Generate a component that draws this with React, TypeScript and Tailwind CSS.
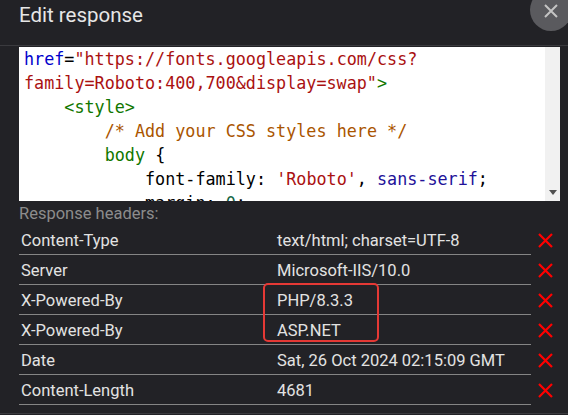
import React from "react";

const rows: [string, string][] = [
  ["Content-Type", "text/html; charset=UTF-8"],
  ["Server", "Microsoft-IIS/10.0"],
  ["X-Powered-By", "PHP/8.3.3"],
  ["X-Powered-By", "ASP.NET"],
  ["Date", "Sat, 26 Oct 2024 02:15:09 GMT"],
  ["Content-Length", "4681"],
];

function RedX() {
  return (
    <svg width="15" height="15" viewBox="0 0 15 15">
      <path d="M1 1L14 14M14 1L1 14" stroke="#ff0000" strokeWidth="2.2" fill="none" />
    </svg>
  );
}

export default function App() {
  return (
    <div
      className="relative w-[568px] h-[415px] overflow-hidden bg-[#222226] flex flex-col"
      style={{ fontFamily: "Roboto, 'Liberation Sans', sans-serif" }}
    >
      <div className="h-[46px] shrink-0 border-b border-[#3a3a3e] pl-[19px] pt-[1px]">
        <div className="text-[20.5px] leading-[28px] text-[#e6e6e6]">Edit response</div>
      </div>

      <div className="flex flex-col pl-[19px] pr-[8px] pt-[1px]">
        <div className="h-[154px] bg-white flex">
          <div
            className="flex-1 overflow-hidden pl-[5px] text-[16.75px] leading-[24px] whitespace-pre text-black"
            style={{ fontFamily: "'DejaVu Sans Mono', monospace" }}
          >
            <div>
              <span className="text-[#0000cc]">href</span>=
              <span className="text-[#aa1111]">"https://fonts.googleapis.com/css?</span>
            </div>
            <div>
              <span className="text-[#aa1111]">family=Roboto:400,700&amp;display=swap"</span>
              <span className="text-[#117700]">&gt;</span>
            </div>
            <div>
              {"    "}
              <span className="text-[#117700]">&lt;style&gt;</span>
            </div>
            <div>
              {"        "}
              <span className="text-[#aa5500]">/* Add your CSS styles here */</span>
            </div>
            <div>
              {"        "}
              <span className="text-[#117700]">body</span> {"{"}
            </div>
            <div>
              {"            "}font-family: <span className="text-[#aa1111]">'Roboto'</span>,{" "}
              <span className="text-[#221199]">sans-serif</span>;
            </div>
            <div>
              {"            "}margin: <span className="text-[#116644]">0</span>;
            </div>
          </div>
          <div className="w-[15px] bg-[#f1f1f1] flex items-end justify-center pb-[6px]">
            <svg width="8" height="5" viewBox="0 0 8 5">
              <path d="M0 0H8L4 5Z" fill="#505050" />
            </svg>
          </div>
        </div>

        <div className="text-[16.5px] leading-[24px] text-[#8c8c8c] pt-[1px] h-[24px]">Response headers:</div>

        <div className="flex flex-col">
          {rows.map(([k, v], i) => (
            <div key={i} className="flex h-[30px]">
              <div className="w-[512px] flex items-center pt-[4px] border-b border-[#858585] text-[16.5px] text-[#e2e2e2]">
                <div className="w-[256px] pl-[2px]">{k}</div>
                <div className="pl-[2px]">{v}</div>
              </div>
              <div className="flex-1 flex items-center justify-center pt-[1px]">
                <RedX />
              </div>
            </div>
          ))}
        </div>
      </div>

      <div className="mt-[8px] border-t border-[#3a3a3e]" />

      <div className="absolute left-[263px] top-[283px] w-[116px] h-[59px] border-2 border-[#e53935] rounded-[5px]" />

      <div className="absolute left-[530px] top-[-11px] w-[42px] h-[42px] rounded-full bg-[#5a5a5e] flex items-center justify-center">
        <svg width="14" height="14" viewBox="0 0 14 14" className="mt-[2px]">
          <path d="M1 1L13 13M13 1L1 13" stroke="#c4c4c4" strokeWidth="2" fill="none" />
        </svg>
      </div>
    </div>
  );
}
